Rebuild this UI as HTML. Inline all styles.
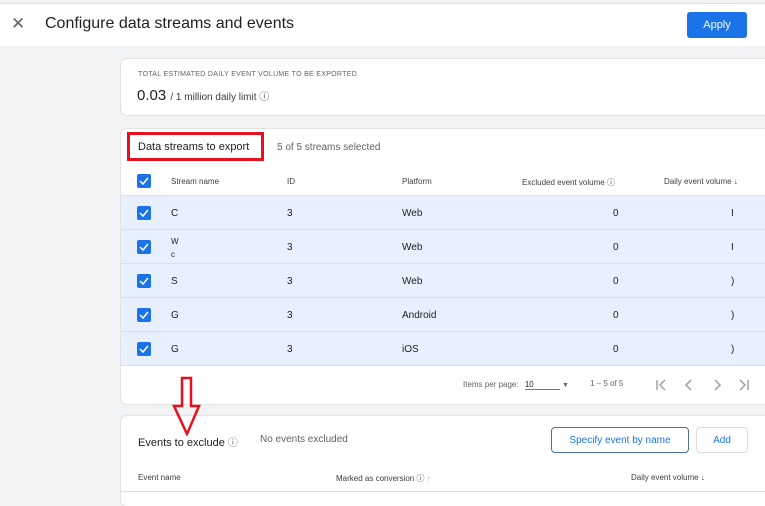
<!DOCTYPE html>
<html><head><style>
*{box-sizing:border-box;margin:0;padding:0}
body{width:765px;height:500px;overflow:hidden;background:#f1f3f4;font-family:"Liberation Sans",Arial,sans-serif;color:#202124;position:relative}
.a{position:absolute}
.top{left:0;top:3px;width:765px;height:43px;background:#fff;border-top:1px solid #e0e0e0}
.card{background:#fff;border-radius:6px;left:121px;width:650px;box-shadow:0 0 0 1px #e3e3e3}
.cb{width:14px;height:14px;background:#1a73e8;border-radius:2px}
.cb svg{display:block}
.row{left:121px;width:644px;height:34px;background:#e8f0fe;border-bottom:1px solid #d6def0;font-size:10px}
.row span{position:absolute;top:12px}
.h{font-size:8px;color:#3c4043;white-space:nowrap}
.pg{position:absolute;top:248px}
</style></head><body>
<div class="a top">
<div class="a" style="left:11px;top:10px;font-size:17px;color:#5f6368">✕</div>
<div class="a" style="left:45px;top:11px;font-size:16px">Configure data streams and events</div>
<div class="a" style="left:687px;top:8px;width:60px;height:26px;background:#1a73e8;border-radius:3px;color:#fff;font-size:11px;text-align:center;line-height:26px">Apply</div>
</div>
<div class="a card" style="top:59px;height:56px">
<div class="a" style="left:17px;top:12px;font-size:7px;letter-spacing:.3px;color:#5f6368">TOTAL ESTIMATED DAILY EVENT VOLUME TO BE EXPORTED</div>
<div class="a" style="left:16px;top:28px;font-size:15px">0.03 <span style="font-size:10px;color:#3c4043">/ 1 million daily limit ⓘ</span></div>
</div>
<div class="a card" style="top:129px;height:275px">
<div class="a" style="left:6px;top:3px;width:137px;height:29px;border:3px solid #e8101e"></div>
<div class="a" style="left:17px;top:12px;font-size:11px">Data streams to export</div>
<div class="a" style="left:156px;top:13px;font-size:10px;color:#5f6368">5 of 5 streams selected</div>
<div class="a cb" style="left:16px;top:45px"><svg width="14" height="14"><path d="M3 7l3 3 5-6" stroke="#fff" stroke-width="1.5" fill="none"/></svg></div>
<div class="a h" style="left:50px;top:48px">Stream name</div>
<div class="a h" style="left:166px;top:48px">ID</div>
<div class="a h" style="left:281px;top:48px">Platform</div>
<div class="a h" style="left:401px;top:48px">Excluded event volume ⓘ</div>
<div class="a h" style="left:543px;top:48px">Daily event volume ↓</div>
<div class="a" style="left:0;top:66px;width:644px;border-top:1px solid #e0e0e0"></div>
<div class="a" style="left:342px;top:251px;font-size:8px;color:#5f6368;white-space:nowrap">Items per page: <span style="color:#202124;margin-left:4px;border-bottom:1px solid #777;padding-right:26px">10</span> <span style="font-size:7px">▼</span></div>
<div class="a" style="left:469px;top:250px;font-size:8px;color:#5f6368">1 – 5 of 5</div>
<svg class="a" style="left:530px;top:248px" width="100" height="16"><g stroke="#9aa0a6" stroke-width="1.5" fill="none"><path d="M6 3v10M14 3l-5 5 5 5"/><path d="M40 3l-5 5 5 5"/><path d="M64 3l5 5-5 5"/><path d="M89 3l5 5-5 5M97 3v10"/></g></svg>
</div>
<div class="a row" style="top:196px"><div class="a cb" style="left:16px;top:10px"><svg width="14" height="14"><path d="M3 7l3 3 5-6" stroke="#fff" stroke-width="1.5" fill="none"/></svg></div><span style="left:50px">C</span><span style="left:166px">3</span><span style="left:281px">Web</span><span style="left:492px">0</span><span style="left:610px">I</span></div>
<div class="a row" style="top:230px"><div class="a cb" style="left:16px;top:10px"><svg width="14" height="14"><path d="M3 7l3 3 5-6" stroke="#fff" stroke-width="1.5" fill="none"/></svg></div><span style="left:50px;top:5px;font-size:8px;line-height:13px">W<br>c</span><span style="left:166px">3</span><span style="left:281px">Web</span><span style="left:492px">0</span><span style="left:610px">I</span></div>
<div class="a row" style="top:264px"><div class="a cb" style="left:16px;top:10px"><svg width="14" height="14"><path d="M3 7l3 3 5-6" stroke="#fff" stroke-width="1.5" fill="none"/></svg></div><span style="left:50px">S</span><span style="left:166px">3</span><span style="left:281px">Web</span><span style="left:492px">0</span><span style="left:610px">)</span></div>
<div class="a row" style="top:298px"><div class="a cb" style="left:16px;top:10px"><svg width="14" height="14"><path d="M3 7l3 3 5-6" stroke="#fff" stroke-width="1.5" fill="none"/></svg></div><span style="left:50px">G</span><span style="left:166px">3</span><span style="left:281px">Android</span><span style="left:492px">0</span><span style="left:610px">)</span></div>
<div class="a row" style="top:332px"><div class="a cb" style="left:16px;top:10px"><svg width="14" height="14"><path d="M3 7l3 3 5-6" stroke="#fff" stroke-width="1.5" fill="none"/></svg></div><span style="left:50px">G</span><span style="left:166px">3</span><span style="left:281px">iOS</span><span style="left:492px">0</span><span style="left:610px">)</span></div>
<div class="a card" style="top:416px;height:90px">
<div class="a" style="left:17px;top:18px;font-size:11px">Events to exclude <span style="font-size:10px;color:#5f6368">ⓘ</span></div>
<div class="a" style="left:139px;top:18px;font-size:10px;color:#5f6368">No events excluded</div>
<div class="a" style="left:430px;top:11px;width:138px;height:26px;border:1px solid #4a6fb5;border-radius:4px;color:#1a73e8;font-size:10px;text-align:center;line-height:25px">Specify event by name</div>
<div class="a" style="left:575px;top:11px;width:52px;height:26px;border:1px solid #dadce0;border-radius:4px;color:#1a73e8;font-size:10px;text-align:center;line-height:25px">Add</div>
<div class="a h" style="left:17px;top:57px">Event name</div>
<div class="a h" style="left:215px;top:57px">Marked as conversion ⓘ <span style="color:#aaa">↑</span></div>
<div class="a h" style="left:510px;top:57px">Daily event volume ↓</div>
<div class="a" style="left:0;top:75px;width:644px;border-top:1px solid #e0e0e0"></div>
</div>
<svg class="a" style="left:170px;top:376px" width="34" height="60"><path d="M12 2h9v28h8L17 58 4 30h8z" fill="none" stroke="#e8101e" stroke-width="2.5"/></svg>
</body></html>
